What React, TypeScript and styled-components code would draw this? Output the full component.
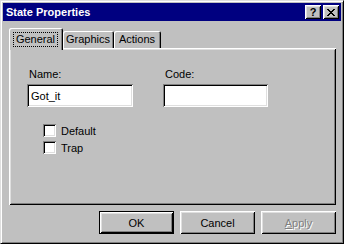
import React from 'react';
import styled, { createGlobalStyle } from 'styled-components';

const GlobalStyle = createGlobalStyle`
  html, body {
    margin: 0;
    padding: 0;
    background: #c0c0c0;
  }
  body {
    font-family: "Liberation Sans", Arial, sans-serif;
    font-size: 11px;
    color: #000;
  }
`;

const raised = `
  box-shadow: inset 1px 1px #fff, inset -1px -1px #000, inset 2px 2px #dfdfdf,
    inset -2px -2px #808080;
`;

const sunken = `
  box-shadow: inset 1px 1px #808080, inset -1px -1px #fff, inset 2px 2px #000,
    inset -2px -2px #dfdfdf;
`;

const CloseGlyph = () => (
  <svg width="8" height="7" viewBox="0 0 8 7" shapeRendering="crispEdges">
    <path
      d="M0 0h2v1h-2zM6 0h2v1h-2zM1 1h2v1h-2zM5 1h2v1h-2zM2 2h4v1h-4zM3 3h2v1h-2zM2 4h4v1h-4zM1 5h2v1h-2zM5 5h2v1h-2zM0 6h2v1h-2zM6 6h2v1h-2z"
      fill="#000"
    />
  </svg>
);

const App = () => {
  return (
    <>
      <GlobalStyle />
      <St.Window>
        <St.TitleBar>
          <St.Title>State Properties</St.Title>
          <St.TitleButtons>
            <St.TitleButton type="button">?</St.TitleButton>
            <St.TitleButton type="button">
              <CloseGlyph />
            </St.TitleButton>
          </St.TitleButtons>
        </St.TitleBar>

        <St.Body>
          <St.TabStrip>
            <St.Tab $active $width={54}>
              <St.Focus>General</St.Focus>
            </St.Tab>
            <St.Tab $width={51}>Graphics</St.Tab>
            <St.Tab $width={47}>Actions</St.Tab>
          </St.TabStrip>

          <St.Panel>
            <St.Fields>
              <St.Field>
                <St.Label>Name:</St.Label>
                <St.Input type="text" defaultValue="Got_it" $width={106} />
              </St.Field>
              <St.Field>
                <St.Label>Code:</St.Label>
                <St.Input type="text" defaultValue="" $width={105} />
              </St.Field>
            </St.Fields>

            <St.Checks>
              <St.CheckRow>
                <St.CheckBox />
                <span>Default</span>
              </St.CheckRow>
              <St.CheckRow>
                <St.CheckBox />
                <span>Trap</span>
              </St.CheckRow>
            </St.Checks>
          </St.Panel>

          <St.ButtonRow>
            <Button type="button" $default>
              OK
            </Button>
            <Button type="button">Cancel</Button>
            <Button type="button" disabled>
              <u>A</u>pply
            </Button>
          </St.ButtonRow>
        </St.Body>
      </St.Window>
    </>
  );
};

export default App;

const St = {
  Window: styled.div`
    box-sizing: border-box;
    width: 344px;
    height: 244px;
    background: #c0c0c0;
    border: 1px solid;
    border-color: #dfdfdf #000 #000 #dfdfdf;
    box-shadow: inset 1px 1px #fff, inset -1px -1px #808080;
    padding: 2px;
    display: flex;
    flex-direction: column;
  `,
  TitleBar: styled.div`
    height: 18px;
    flex: none;
    background: #000080;
    color: #fff;
    display: flex;
    align-items: center;
    padding: 0 2px 0 3px;
  `,
  Title: styled.span`
    flex: 1;
    font-weight: bold;
    font-size: 11px;
    line-height: 13px;
  `,
  TitleButtons: styled.div`
    display: flex;
    gap: 2px;
  `,
  TitleButton: styled.button`
    box-sizing: border-box;
    width: 16px;
    height: 14px;
    padding: 0;
    border: none;
    background: #c0c0c0;
    ${raised}
    display: flex;
    align-items: center;
    justify-content: center;
    font-family: "Liberation Sans", Arial, sans-serif;
    font-weight: bold;
    font-size: 11px;
    line-height: 11px;
    color: #000;
  `,
  Body: styled.div`
    flex: 1;
    display: flex;
    flex-direction: column;
    padding: 7px 5px 0 6px;
  `,
  TabStrip: styled.div`
    display: flex;
    align-items: flex-end;
    height: 20px;
    position: relative;
    z-index: 1;
  `,
  Tab: styled.div<{ $active?: boolean; $width: number }>`
    box-sizing: border-box;
    width: ${(p) => p.$width}px;
    height: ${(p) => (p.$active ? 22 : 17)}px;
    margin-bottom: ${(p) => (p.$active ? -2 : 0)}px;
    background: #c0c0c0;
    border-radius: 2px 2px 0 0;
    box-shadow: inset 1px 1px #fff, inset -1px 0 #000, inset -2px 0 #808080;
    display: flex;
    align-items: center;
    justify-content: center;
    line-height: 13px;
    padding-right: 1px;
  `,
  Focus: styled.span`
    border: 1px dotted #000;
    padding: 0 2px;
    line-height: 13px;
  `,
  Panel: styled.div`
    box-sizing: border-box;
    height: 157px;
    background: #c0c0c0;
    box-shadow: inset 1px 1px #fff, inset -1px -1px #000, inset 2px 2px #dfdfdf,
      inset -2px -2px #808080;
    padding: 20px 0 0 18px;
  `,
  Fields: styled.div`
    display: flex;
    gap: 30px;
  `,
  Field: styled.div`
    display: flex;
    flex-direction: column;
  `,
  Label: styled.label`
    line-height: 13px;
    padding-left: 2px;
    margin-bottom: 3px;
  `,
  Input: styled.input<{ $width: number }>`
    box-sizing: border-box;
    width: ${(p) => p.$width}px;
    height: 23px;
    border: none;
    outline: none;
    background: #fff;
    ${sunken}
    padding: 0 4px;
    font-family: "Liberation Sans", Arial, sans-serif;
    font-size: 11px;
    color: #000;
  `,
  Checks: styled.div`
    display: flex;
    flex-direction: column;
    margin: 15px 0 0 16px;
  `,
  CheckRow: styled.div`
    display: flex;
    align-items: center;
    gap: 5px;
    height: 17px;
  `,
  CheckBox: styled.span`
    box-sizing: border-box;
    width: 13px;
    height: 13px;
    background: #fff;
    ${sunken}
  `,
  ButtonRow: styled.div`
    display: flex;
    justify-content: flex-end;
    gap: 6px;
    margin-top: 6px;
  `,
};

const Button = styled.button<{ $default?: boolean }>`
  box-sizing: border-box;
  width: 75px;
  height: 23px;
  padding: 0;
  border: none;
  background: #c0c0c0;
  font-family: "Liberation Sans", Arial, sans-serif;
  font-size: 11px;
  color: #000;
  ${(p) =>
    p.$default
      ? `box-shadow: inset 0 0 0 1px #000, inset 2px 2px #fff, inset -2px -2px #000,
          inset 3px 3px #dfdfdf, inset -3px -3px #808080;`
      : raised}
  &:disabled {
    color: #808080;
    text-shadow: 1px 1px #fff;
  }
`;
